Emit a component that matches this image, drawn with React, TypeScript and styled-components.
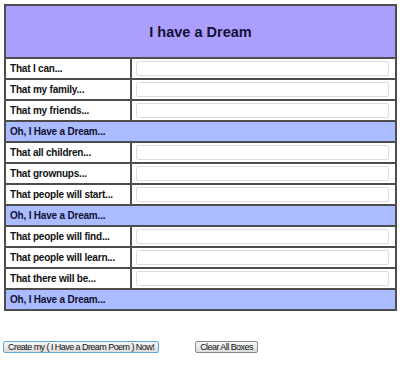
import React from "react";
import { createGlobalStyle, styled } from "styled-components";

const GlobalStyle = createGlobalStyle`
  body {
    margin: 0;
    padding: 4px 3px;
    background: #ffffff;
    font-family: "Liberation Sans", Arial, sans-serif;
  }
`;

const Table = styled.table`
  width: 393px;
  margin-left: 1px;
  border-collapse: collapse;
  border: 2px solid #4d4d4d;
`;

const HeaderCell = styled.th`
  height: 51px;
  padding: 0;
  background: #aa9fff;
  border: 2px solid #4d4d4d;
  font-size: 14.5px;
  font-weight: bold;
  color: #111133;
  text-align: center;
`;

const LabelCell = styled.td`
  width: 120px;
  height: 19px;
  padding: 0 0 0 4px;
  border: 2px solid #4d4d4d;
  font-size: 10px;
  letter-spacing: -0.2px;
  font-weight: bold;
  color: #111;
  white-space: nowrap;
`;

const FieldCell = styled.td`
  height: 19px;
  padding: 0 6px 0 4px;
  border: 2px solid #4d4d4d;
`;

const ChorusCell = styled.td`
  height: 19px;
  padding: 0 0 0 4px;
  background: #aabbff;
  border: 2px solid #4d4d4d;
  font-size: 10px;
  letter-spacing: -0.2px;
  font-weight: bold;
  color: #111133;
`;

const Field = styled.input`
  display: block;
  box-sizing: border-box;
  width: 100%;
  height: 15px;
  margin: 0;
  border: 1px solid #dcdcdc;
  border-radius: 2px;
  background: #fff;
`;

const Actions = styled.div`
  display: flex;
  gap: 36px;
  margin-top: 30px;
`;

const Button = styled.button<{ $focused?: boolean }>`
  height: 12px;
  padding: 0 4px;
  font-family: "Liberation Sans", Arial, sans-serif;
  font-size: 9px;
  letter-spacing: -0.55px;
  line-height: 10px;
  color: #111;
  border: 1px solid ${(p) => (p.$focused ? "#5fa8d8" : "#8a8a8a")};
  border-radius: 2px;
  background: linear-gradient(#f6f6f6, #dddddd);
`;

const stanzas = [
  ["That I can...", "That my family...", "That my friends..."],
  ["That all children...", "That grownups...", "That people will start..."],
  ["That people will find...", "That people will learn...", "That there will be..."],
];

export default function App() {
  return (
    <React.Fragment>
      <GlobalStyle />
      <Table>
        <tbody>
          <tr>
            <HeaderCell colSpan={2}>I have a Dream</HeaderCell>
          </tr>
          {stanzas.map((lines, i) => (
            <React.Fragment key={i}>
              {lines.map((line) => (
                <tr key={line}>
                  <LabelCell>{line}</LabelCell>
                  <FieldCell>
                    <Field type="text" />
                  </FieldCell>
                </tr>
              ))}
              <tr>
                <ChorusCell colSpan={2}>Oh, I Have a Dream...</ChorusCell>
              </tr>
            </React.Fragment>
          ))}
        </tbody>
      </Table>
      <Actions>
        <Button $focused>Create my ( I Have a Dream Poem ) Now!</Button>
        <Button>Clear All Boxes</Button>
      </Actions>
    </React.Fragment>
  );
}
